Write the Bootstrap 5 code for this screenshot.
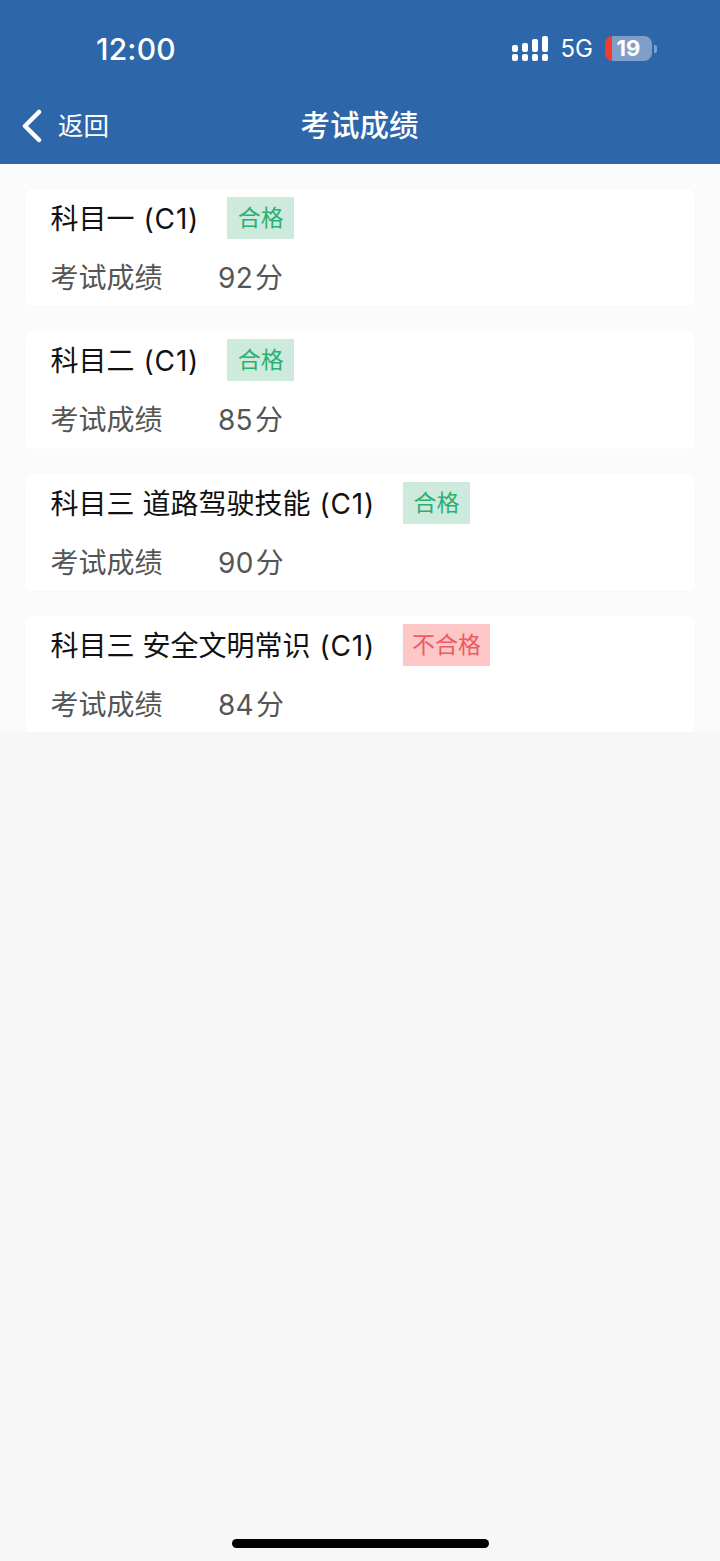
<!DOCTYPE html>
<html lang="zh-CN">
<head>
<meta charset="utf-8">
<title>考试成绩</title>
<link rel="stylesheet" href="https://cdn.jsdelivr.net/npm/bootstrap@5.3.0/dist/css/bootstrap.min.css">
<style>
html,body{height:100%}
body{background:#f7f7f7;font-family:"Inter","Noto Sans CJK SC",sans-serif;height:1561px;overflow:hidden}
.top-bar{background:#2d66a9;height:164px;color:#fff}
.status-row{height:88px;padding:9px 63px 0 96px}
.clock{font-size:30px;font-weight:500;line-height:1;letter-spacing:.2px}
.net{font-size:24px;line-height:1;margin:0 12px 0 13px}
.batt{width:47px;height:25px;border-radius:8px;background:linear-gradient(90deg,#f33c2c 0,#f33c2c 7px,#7f9fca 7px);font-size:22px;font-weight:700;line-height:25px;text-align:center}
.batt-nub{width:3px;height:8px;background:#7f9fca;border-radius:0 2px 2px 0;margin-left:2px}
.nav-row{height:76px;padding:0 0 0 21px}
.nav-side{width:150px}
.back-text{font-size:25.5px;line-height:1;margin-left:15px}
.nav-title{font-size:29.5px;font-weight:500;line-height:1;padding-left:2px}
.sheet{background:#fbfbfb;height:568px;overflow:hidden;padding:25px 25px 0}
.score-card{background:#fff;border-radius:7px;height:117.33px;margin-bottom:25px;padding:8px 0 0 25.5px;box-shadow:0 0 2px rgba(0,0,0,.03)}
.title-line{height:42px;font-size:28px;line-height:42px;color:#111}
.title-text{padding-top:1px}
.paren{margin-left:9px;letter-spacing:.85px}
.tag-box{height:42px;font-size:23px;line-height:42px;margin-left:28px}
.tag-ok{background:#cdeadd;color:#2bb073;padding:0 10.5px}
.tag-bad{background:#fdc6c7;color:#ec5a63;padding:0 9px}
.score-line{font-size:28px;line-height:1;color:#555;margin-top:25px}
.score-label{width:167.5px}
.score-num{letter-spacing:.3px;margin-right:2px}
.home-bar{position:fixed;left:232px;bottom:13px;width:257px;height:9px;background:#000;border-radius:5px}
</style>
</head>
<body>
<header class="top-bar">
  <div class="status-row d-flex align-items-center justify-content-between">
    <div class="clock">12:00</div>
    <div class="d-flex align-items-center">
      <svg width="37" height="26" viewBox="0 0 37 26" fill="#fff" aria-hidden="true">
        <rect x="1" y="9" width="6" height="7" rx="2"/><rect x="11" y="7" width="6" height="9" rx="2"/><rect x="21" y="3" width="6" height="13" rx="2"/><rect x="31" y="0" width="6" height="16" rx="2"/>
        <rect x="1" y="18" width="6" height="7" rx="2"/><rect x="11" y="18" width="6" height="7" rx="2"/><rect x="21" y="18" width="6" height="7" rx="2"/><rect x="31" y="18" width="6" height="7" rx="2"/>
      </svg>
      <span class="net">5G</span>
      <div class="batt">19</div>
      <div class="batt-nub"></div>
    </div>
  </div>
  <div class="nav-row d-flex align-items-center">
    <div class="nav-side d-flex align-items-center">
      <svg width="22" height="34" viewBox="0 0 22 34" fill="none" stroke="#fff" stroke-width="4.5" stroke-linecap="round" stroke-linejoin="round" aria-hidden="true"><path d="M18 3 4 17l14 14"/></svg>
      <span class="back-text">返回</span>
    </div>
    <div class="flex-grow-1 text-center nav-title">考试成绩</div>
    <div class="nav-side ms-4"></div>
  </div>
</header>
<main class="sheet">
  <section class="score-card">
    <div class="title-line d-flex"><span class="title-text">科目一<span class="paren">(C1)</span></span><span class="tag-box tag-ok">合格</span></div>
    <div class="score-line d-flex"><span class="score-label">考试成绩</span><span><span class="score-num">92</span>分</span></div>
  </section>
  <section class="score-card">
    <div class="title-line d-flex"><span class="title-text">科目二<span class="paren">(C1)</span></span><span class="tag-box tag-ok">合格</span></div>
    <div class="score-line d-flex"><span class="score-label">考试成绩</span><span><span class="score-num">85</span>分</span></div>
  </section>
  <section class="score-card">
    <div class="title-line d-flex"><span class="title-text">科目三 道路驾驶技能<span class="paren">(C1)</span></span><span class="tag-box tag-ok">合格</span></div>
    <div class="score-line d-flex"><span class="score-label">考试成绩</span><span><span class="score-num">90</span>分</span></div>
  </section>
  <section class="score-card">
    <div class="title-line d-flex"><span class="title-text">科目三 安全文明常识<span class="paren">(C1)</span></span><span class="tag-box tag-bad">不合格</span></div>
    <div class="score-line d-flex"><span class="score-label">考试成绩</span><span><span class="score-num">84</span>分</span></div>
  </section>
</main>
<div class="home-bar"></div>
<script src="https://cdn.jsdelivr.net/npm/bootstrap@5.3.0/dist/js/bootstrap.bundle.min.js"></script>
</body>
</html>
